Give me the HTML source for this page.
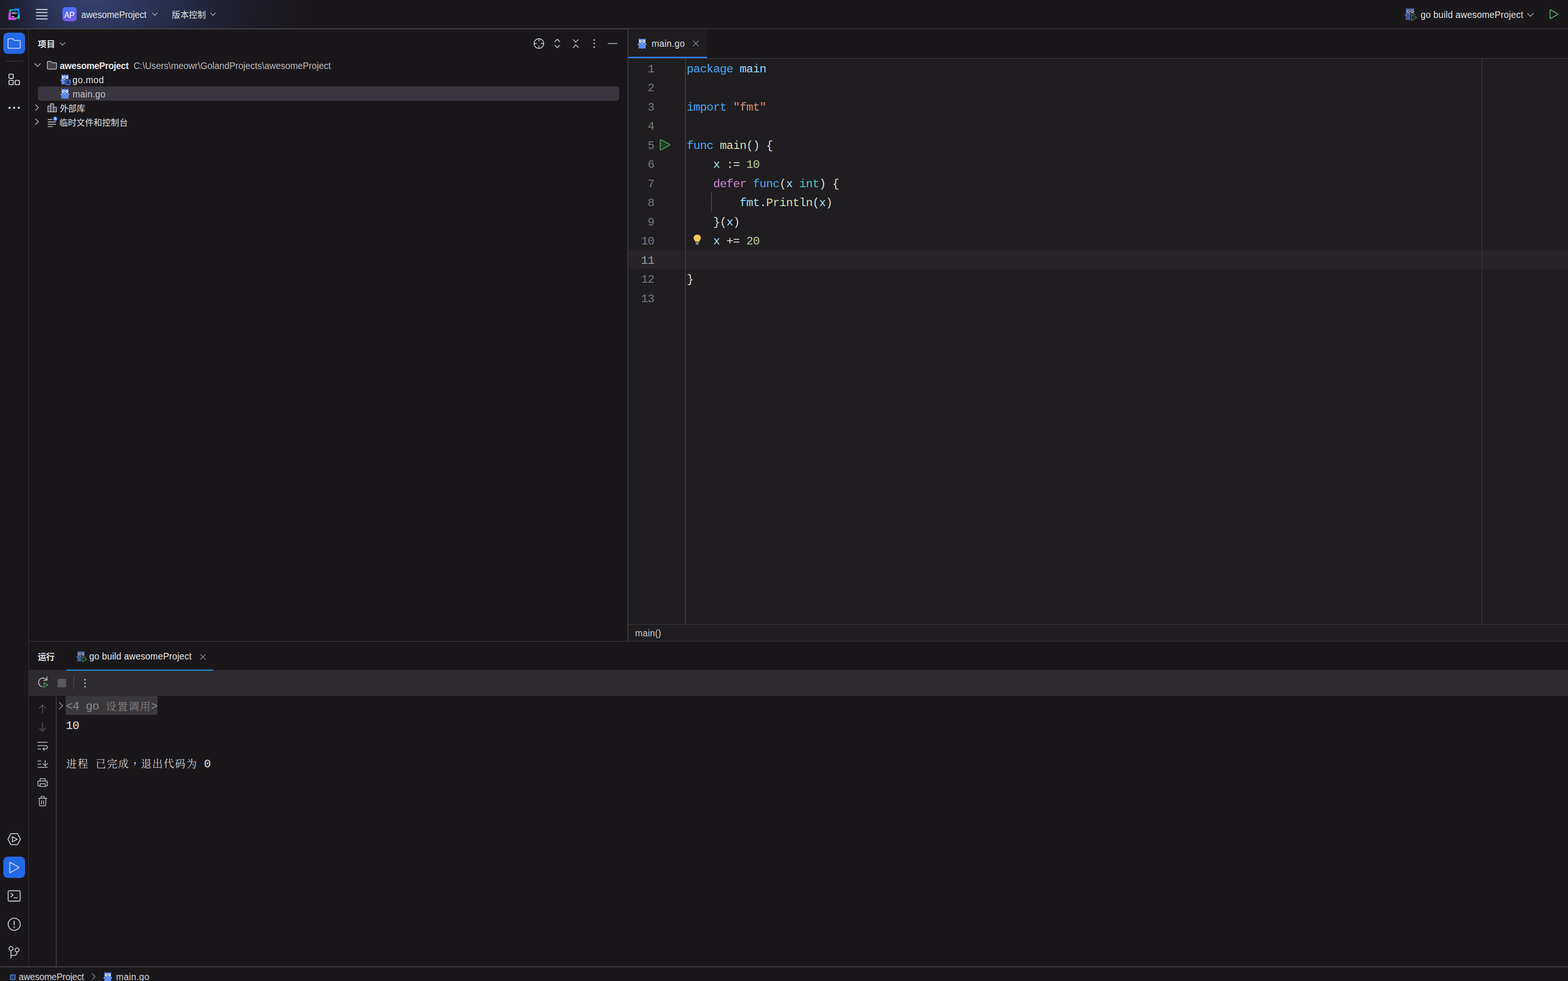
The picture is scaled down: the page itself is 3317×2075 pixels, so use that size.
<!DOCTYPE html>
<html lang="zh-CN">
<head>
<meta charset="utf-8">
<title>awesomeProject – main.go</title>
<style>
*{box-sizing:border-box;margin:0;padding:0}
html,body{width:3317px;height:2075px;overflow:hidden;background:#1a171b}
body{position:relative;font-family:"Liberation Sans","Noto Sans CJK SC",sans-serif;color:#dfe1e5}
.a{position:absolute}
.l{position:absolute;white-space:nowrap;font-size:19px;line-height:30px;height:30px;margin-top:1px;transform:scaleY(1.05);transform-origin:0 21.5px;font-family:"Liberation Sans","Noto Sans CJK SC",sans-serif;color:#dfe1e5}
.c{position:absolute;white-space:nowrap;font-size:18px;line-height:30px;height:30px;margin-top:1px;font-family:"Liberation Sans","Noto Sans CJK SC",sans-serif;color:#dfe1e5}
.b{font-weight:bold}
.ln{position:absolute;left:1329px;width:55px;text-align:right;font:24.5px/40.5px "Liberation Mono",monospace;letter-spacing:-.7px;margin-top:2.9px;color:#7a7678;height:40.5px}
.cl{position:absolute;left:1452.7px;white-space:pre;font:24.5px/40.5px "Liberation Mono",monospace;letter-spacing:-.7px;margin-top:2.9px;color:#d8d8d8;height:40.5px}
.k{color:#4ba6f2}.v{color:#9cdcfe}.s{color:#ce9178}.f{color:#dcdcaa}.n{color:#b5cea8}.d{color:#d183c9}.ty{color:#4ec9b0}.p{color:#d9d9d9}
.co{position:absolute;left:139.3px;white-space:pre;font:24.5px/40.5px "Liberation Mono","Noto Serif CJK SC",monospace;letter-spacing:-.7px;margin-top:4.1px;color:#e6e6e6;height:40.5px}
.co i{font-style:normal;font-family:"Noto Serif CJK SC",serif;font-size:22px;font-weight:300;letter-spacing:2px;line-height:0;position:relative;left:1px;top:.6px}
svg{position:absolute;overflow:visible}
</style>
</head>
<body>
<!--DEFS_S-->
<svg width="0" height="0" style="left:0;top:0"><defs>
<symbol id="g" viewBox="0 0 24 24">
<path d="M3.9 2.4 Q3.9 1.3 5 1.6 L8.4 3 L4.6 6.6Z M19.1 2.4 Q19.1 1.3 18 1.6 L14.6 3 L18.4 6.6Z" fill="#588cf8"/>
<path d="M4.1 9.2 C4.1 4 7.6 2 11.5 2 C15.4 2 18.9 4 18.9 9.2 L19.3 17 C19.3 21.2 16 22.8 11.5 22.8 C7 22.8 3.7 21.2 3.7 17Z" fill="#588cf8"/>
<ellipse cx="3.2" cy="13.6" rx="1.5" ry="1.1" transform="rotate(-30 3.2 13.6)" fill="#e2ab93"/>
<ellipse cx="19.8" cy="13.6" rx="1.5" ry="1.1" transform="rotate(30 19.8 13.6)" fill="#e2ab93"/>
<ellipse cx="4.9" cy="21.5" rx="1.3" ry="1" transform="rotate(-35 4.9 21.5)" fill="#e2ab93"/>
<ellipse cx="18.1" cy="21.5" rx="1.3" ry="1" transform="rotate(35 18.1 21.5)" fill="#e2ab93"/>
<circle cx="7.9" cy="7.3" r="2.8" fill="#fff"/><circle cx="15.1" cy="7.3" r="2.8" fill="#fff"/>
<circle cx="8.3" cy="7.2" r="1.05" fill="#15151a"/><circle cx="14.7" cy="7.2" r="1.05" fill="#15151a"/>
<ellipse cx="11.5" cy="11.6" rx="1.7" ry="1.1" fill="#f1d5c6"/>
<ellipse cx="11.5" cy="10.2" rx="1" ry="0.9" fill="#15151a"/>
</symbol>
<symbol id="gr" viewBox="0 0 24 24">
<g opacity=".6"><use href="#g" width="24" height="24"/></g>
<path d="M14 12.8 L14 23.6 L23.3 18.2Z" fill="#1a171b" stroke="#1a171b" stroke-width="4.4" stroke-linejoin="round"/>
<path d="M14 12.8 L14 23.6 L23.3 18.2Z" fill="#1d2921" stroke="#3c7346" stroke-width="1.6" stroke-linejoin="round"/>
</symbol>
</defs></svg>
<!--DEFS_E-->
<!-- ===== title bar ===== -->
<div class="a" id="titlebar" style="left:0;top:0;width:3317px;height:60px;background:linear-gradient(180deg,rgba(26,23,27,0) 0,rgba(26,23,27,.2) 100%),linear-gradient(90deg,#1c1b27 0,#20233a 40px,#2a3457 90px,#323f6c 150px,#33406e 200px,#2f3a63 270px,#29304f 350px,#23263d 430px,#1e1d2b 510px,#1b1920 600px,#1a171b 680px)"></div>
<div class="a" style="left:0;top:60px;width:3317px;height:1.5px;background:#49474c"></div>
<!--TITLE_S-->
<svg style="left:17px;top:17px" width="26" height="26" viewBox="17 17 26 26">
<defs><linearGradient id="lgm" x1="0" y1="0" x2="1" y2="1"><stop offset="0" stop-color="#a562f7"/><stop offset=".5" stop-color="#e046ff"/><stop offset="1" stop-color="#c955fb"/></linearGradient>
<linearGradient id="lgb" x1="0" y1="0" x2="0" y2="1"><stop offset="0" stop-color="#0a7dff"/><stop offset=".55" stop-color="#0a7dff"/><stop offset=".8" stop-color="#10d993"/><stop offset="1" stop-color="#10e08c"/></linearGradient></defs>
<path d="M19.8 25.5 L19.8 21.6 Q19.8 20 21.4 20 L28 20 L24 25Z" fill="#17dc8d"/>
<path d="M26.6 20.8 L30 18.3 Q30.6 17.9 31.3 17.9 L39 17.8 Q40 17.8 40.2 18.8 L41.8 30 L42.1 39 Q42.1 39.8 41.3 39.8 L34.6 39.8 L36.5 30 L30 23 L22 24.6Z" fill="url(#lgb)"/>
<path d="M17.9 28 Q17.9 27.2 18.6 26.8 L23.5 23.8 L26 36 L36 37 L33.2 41.5 Q32.8 42.1 32 42.1 L19 42.1 Q17.9 42.1 17.9 41Z" fill="url(#lgm)"/>
<rect x="23" y="23" width="14" height="14" fill="#000"/>
<text x="24" y="30.2" font-family="Liberation Sans,sans-serif" font-weight="bold" font-size="7.6" letter-spacing="-.3" fill="#fff">GO</text>
<rect x="24.1" y="34.2" width="6.6" height="1.8" fill="#d8d8d8"/>
</svg>
<svg style="left:76px;top:18px" width="25" height="24" viewBox="76 18 25 24" fill="none" stroke="#dcdde4" stroke-width="2"><path d="M76.2 19.9H100.6M76.2 26.6H100.6M76.2 33.4H100.6M76.2 40.1H100.6"/></svg>
<div class="a" style="left:132px;top:15px;width:30px;height:30px;border-radius:7px;background:linear-gradient(160deg,#4a72f4 0%,#5a68f0 45%,#8558e6 100%)"></div>
<div class="l" style="left:136.3px;top:15.8px;font-size:18px;color:#fff;transform:scale(.9,1.02);transform-origin:0 21.5px">AP</div>
<div class="l" id="t_proj" style="left:171.80px;top:15.5px;letter-spacing:-0.167px">awesomeProject</div>
<svg style="left:321px;top:26px" width="13" height="8" viewBox="0 0 13 8" fill="none" stroke="#a8a9b0" stroke-width="1.6"><path d="M1 1L6.5 6.5L12 1"/></svg>
<div class="c" id="t_vcs" style="left:363.50px;top:15.5px;letter-spacing:-0.033px">版本控制</div>
<svg style="left:444px;top:26px" width="13" height="8" viewBox="0 0 13 8" fill="none" stroke="#a8a9b0" stroke-width="1.6"><path d="M1 1L6.5 6.5L12 1"/></svg>
<!-- run config -->
<svg style="left:2969px;top:14.7px" width="29" height="29"><use href="#gr" width="29" height="29"/></svg>
<div class="l" id="t_rc" style="left:3005.30px;top:16px;letter-spacing:0.209px">go build awesomeProject</div>
<svg style="left:3230px;top:27px" width="15" height="9" viewBox="0 0 15 9" fill="none" stroke="#a8a9b0" stroke-width="1.6"><path d="M1 1L7.5 7.5L14 1"/></svg>
<svg style="left:3277px;top:19px" width="21" height="22" viewBox="0 0 21 22" fill="none" stroke="#5fb865" stroke-width="1.8" stroke-linejoin="round"><path d="M2 3 Q2 1.2 3.6 2 L17.6 10 Q19 11 17.6 12 L3.6 20 Q2 20.8 2 19Z"/></svg>
<!--TITLE_E-->
<!-- ===== left strip ===== -->
<div class="a" style="left:59.5px;top:61px;width:1.5px;height:1983px;background:#37353a"></div>
<!--STRIP_S-->
<div class="a" style="left:7px;top:69px;width:46px;height:45px;border-radius:9.5px;background:#2468e6"></div>
<svg style="left:0;top:61px" width="60" height="1983" viewBox="0 61 60 1983" fill="none" stroke="#d6d8de" stroke-width="1.8" stroke-linejoin="round" stroke-linecap="round">
<path d="M17 84 Q17 81.8 19.2 81.8 L26.6 81.8 Q27.6 81.8 28.2 82.6 L30.4 85.6 L40.6 85.6 Q42.8 85.6 42.8 87.8 L42.8 99.9 Q42.8 102.1 40.6 102.1 L19.2 102.1 Q17 102.1 17 99.9Z" stroke="#cfd6ea" stroke-linecap="butt"/>
<path d="M12 129.5H48.5" stroke="#38363b" stroke-width="1.3" stroke-linecap="butt"/>
<rect x="18.9" y="156.8" width="9.2" height="9.2" rx="2.2" stroke-width="1.9"/>
<rect x="18.9" y="169.9" width="9.2" height="9.2" rx="2.2" stroke-width="1.9"/>
<rect x="32" y="169.9" width="9.2" height="9.2" rx="2.2" stroke-width="1.9"/>
<g fill="#d6d8de" stroke="none"><circle cx="20.2" cy="228" r="2.3"/><circle cx="29.9" cy="228" r="2.3"/><circle cx="39.7" cy="228" r="2.3"/></g>
<!-- services -->
<path d="M16.8 1775 L22.7 1764 Q23.1 1763.4 23.8 1763.4 L36.3 1763.4 Q37 1763.4 37.4 1764 L43.3 1775 L37.4 1786 Q37 1786.6 36.3 1786.6 L23.8 1786.6 Q23.1 1786.6 22.7 1786Z" stroke-width="1.7"/>
<path d="M26.3 1769.8 L36.5 1775.2 L26.3 1780.6Z" stroke-width="1.7"/>
<!-- terminal -->
<rect x="17.3" y="1884.2" width="25.3" height="21.8" rx="2.6" stroke-width="1.8"/>
<path d="M23.2 1889.4 L27.6 1893.2 L23.2 1897 M30 1898.8 H36.4" stroke-width="1.8"/>
<!-- problems -->
<circle cx="30.1" cy="1955" r="12.8" stroke-width="1.8"/>
<path d="M30 1948.6 V1956.2" stroke-width="2"/><circle cx="30" cy="1961" r="1.5" fill="#d6d8de" stroke="none"/>
<!-- git -->
<circle cx="23.3" cy="2006.4" r="4.2" stroke-width="1.8"/><circle cx="36.1" cy="2009.3" r="4.2" stroke-width="1.8"/>
<path d="M23.3 2010.8 V2027.4 M36.1 2013.7 Q36.1 2020.9 29 2020.9 L23.3 2020.9" stroke-width="1.8" stroke-linecap="butt"/>
</svg>
<div class="a" style="left:7px;top:1812px;width:46px;height:45px;border-radius:9.5px;background:#2468e6"></div>
<svg style="left:7px;top:1812px" width="46" height="45" viewBox="7 1812 46 45" fill="none" stroke="#d3d9ec" stroke-width="1.8" stroke-linejoin="round"><path d="M20.6 1825.3 Q20.6 1823.6 22.1 1824.4 L39.3 1834.1 Q40.4 1834.9 39.3 1835.7 L22.1 1845.5 Q20.6 1846.3 20.6 1844.6Z"/></svg>
<!--STRIP_E-->
<!-- ===== project panel ===== -->
<!--PROJECT_S-->
<div class="c b" id="p_title" style="left:80.00px;top:78px;color:#e3e4e8;letter-spacing:0.400px">项目</div>
<svg style="left:126px;top:89px" width="13" height="8" viewBox="0 0 13 8" fill="none" stroke="#a8a9b0" stroke-width="1.5"><path d="M0.8 1L6.3 6.5L11.8 1"/></svg>
<svg style="left:1110px;top:70px" width="220" height="45" viewBox="1110 70 220 45" fill="none" stroke="#cfd0d6" stroke-width="1.6" stroke-linecap="round" stroke-linejoin="round">
<circle cx="1140" cy="92.1" r="10.2"/><path d="M1140 82V87.8M1140 96.4V102.2M1129.9 92.1H1135.7M1144.3 92.1H1150.1" stroke-linecap="butt"/>
<path d="M1173.6 88.4L1178.9 83.1L1184.2 88.4M1173.6 95.8L1178.9 101.1L1184.2 95.8"/>
<path d="M1212.5 83.8L1217.9 89.2L1223.3 83.8M1212.5 100.5L1217.9 95.1L1223.3 100.5"/>
<g fill="#cfd0d6" stroke="none"><circle cx="1257" cy="84.6" r="1.6"/><circle cx="1257" cy="92.1" r="1.6"/><circle cx="1257" cy="99.6" r="1.6"/></g>
<path d="M1286.3 92H1305.3"/>
</svg>
<!-- tree -->
<div class="a" style="left:80px;top:183px;width:1230px;height:30px;border-radius:6px;background:#39363f"></div>
<svg style="left:72px;top:132px" width="16" height="12" viewBox="72 132 16 12" fill="none" stroke="#b4b5bb" stroke-width="1.6" stroke-linecap="round" stroke-linejoin="round"><path d="M73.7 134.6L79.5 140.4L85.3 134.6"/></svg>
<svg style="left:98px;top:127px" width="24" height="24" viewBox="98 127 24 24" fill="#403e46" stroke="#c9cad1" stroke-width="1.5" stroke-linejoin="round"><path d="M100.2 131.5 Q100.2 129.8 101.9 129.8 L107 129.8 Q107.8 129.8 108.3 130.4 L110.2 132.8 L117.9 132.8 Q119.6 132.8 119.6 134.5 L119.6 144.5 Q119.6 146.2 117.9 146.2 L101.9 146.2 Q100.2 146.2 100.2 144.5Z"/></svg>
<div class="l b" id="p_root" style="left:126.50px;top:124.0px;color:#e6e7ea;letter-spacing:-0.318px">awesomeProject</div>
<div class="l" id="p_path" style="left:282.40px;top:124.0px;color:#b9b8bd;letter-spacing:0.007px">C:\Users\meowr\GolandProjects\awesomeProject</div>
<svg style="left:125.5px;top:156px" width="24" height="24"><use href="#g" width="24" height="24"/></svg>
<svg style="left:137px;top:167px" width="14" height="15" viewBox="137 167 14 15"><rect x="137.3" y="167.2" width="13.4" height="13.4" rx="3.6" fill="#1a171b"/><rect x="139.3" y="169.2" width="9.4" height="10.4" rx="2.4" fill="#273762" stroke="#5a8cf5" stroke-width="1.5"/></svg>
<div class="l" id="p_gomod" style="left:153.30px;top:154.0px;letter-spacing:0.559px">go.mod</div>
<svg style="left:125.5px;top:186px" width="24" height="24"><use href="#g" width="24" height="24"/></svg>
<div class="l" id="p_maingo" style="left:153.4px;top:184px;color:#c2c1c6;letter-spacing:0.33px">main.go</div>
<svg style="left:72px;top:220px" width="12" height="16" viewBox="72 220 12 16" fill="none" stroke="#b4b5bb" stroke-width="1.6" stroke-linecap="round" stroke-linejoin="round"><path d="M75.2 221.9L81.2 227.6L75.2 233.3"/></svg>
<svg style="left:98px;top:216px" width="24" height="24" viewBox="98 216 24 24" fill="#403e46" stroke="#c9cad1" stroke-width="1.5" stroke-linejoin="round"><path d="M101.4 224.3H107.3V236.6H101.4Z M107.3 219.5H113.3V236.6H107.3Z M113.3 226.7H119.4V236.6H113.3Z"/></svg>
<div class="c" id="p_ext" style="left:126.50px;top:214px;letter-spacing:-0.150px">外部库</div>
<svg style="left:72px;top:250px" width="12" height="16" viewBox="72 250 12 16" fill="none" stroke="#b4b5bb" stroke-width="1.6" stroke-linecap="round" stroke-linejoin="round"><path d="M75.2 251.7L81.2 257.4L75.2 263.1"/></svg>
<svg style="left:98px;top:245px" width="26" height="26" viewBox="98 245 26 26" fill="none" stroke="#c9cad1" stroke-width="1.6"><path d="M101 252.9H110.5M101 257.9H118.3M101 262.9H118.3M101 267.8H111.8"/><circle cx="116.6" cy="251.2" r="5.3" fill="#4f86f3" stroke="#1a171b" stroke-width="1.4"/><path d="M116.5 248.3V251.6L118.8 253.4" stroke="#fff" stroke-width="1.3" stroke-linecap="round" fill="none"/></svg>
<div class="c" id="p_scratch" style="left:125.50px;top:243.5px;letter-spacing:0.143px">临时文件和控制台</div>
<!--PROJECT_E-->
<!-- ===== editor ===== -->
<div class="a" style="left:1327.2px;top:61px;width:1.7px;height:1295px;background:#3a383c"></div>
<!--EDITOR_S-->
<div class="a" style="left:1329px;top:61px;width:1988px;height:62px;background:#1a171b"></div>
<div class="a" style="left:1329px;top:61px;width:167px;height:62px;background:#1f1d20"></div>
<div class="a" style="left:1329px;top:122.6px;width:1988px;height:1.5px;background:#454348"></div>
<div class="a" style="left:1329px;top:119.7px;width:167px;height:3.5px;border-radius:1.8px;background:#2f7bf2"></div>
<svg style="left:1347px;top:80px" width="24" height="24"><use href="#g" width="24" height="24"/></svg>
<div class="l" id="e_tab" style="left:1378.50px;top:76.5px;color:#dfe0e4;letter-spacing:0.412px">main.go</div>
<svg style="left:1465px;top:85px" width="14" height="14" viewBox="0 0 14 14" fill="none" stroke="#86858b" stroke-width="1.5" stroke-linecap="round"><path d="M1.5 1.5L12.5 12.5M12.5 1.5L1.5 12.5"/></svg>
<div class="a" style="left:1329px;top:124px;width:1988px;height:1196px;background:#1f1d20"></div>
<div class="a" style="left:1329px;top:529px;width:1988px;height:40px;background:#262427"></div>
<div class="a" style="left:1449px;top:124px;width:2px;height:1196px;background:#3b393d"></div>
<div class="a" style="left:3134px;top:124px;width:1px;height:1196px;background:#3e3c40"></div>
<div class="a" style="left:1504.2px;top:407px;width:1.6px;height:41px;background:#434145"></div>
<div class="a" style="left:1461px;top:326.5px;width:1px;height:243px;background:#232124"></div>
<div class="ln" style="top:124.0px;color:#7a7678">1</div>
<div class="cl" style="top:124.0px"><span class="k">package</span> <span class="v">main</span></div>
<div class="ln" style="top:164.5px;color:#7a7678">2</div>
<div class="ln" style="top:205.0px;color:#7a7678">3</div>
<div class="cl" style="top:205.0px"><span class="k">import</span> <span class="s">"fmt"</span></div>
<div class="ln" style="top:245.5px;color:#7a7678">4</div>
<div class="ln" style="top:286.0px;color:#7a7678">5</div>
<div class="cl" style="top:286.0px"><span class="k">func</span> <span class="f">main</span><span class="p">() {</span></div>
<div class="ln" style="top:326.5px;color:#7a7678">6</div>
<div class="cl" style="top:326.5px">    <span class="v">x</span> <span class="p">:=</span> <span class="n">10</span></div>
<div class="ln" style="top:367.0px;color:#7a7678">7</div>
<div class="cl" style="top:367.0px">    <span class="d">defer</span> <span class="k">func</span><span class="p">(</span><span class="v">x</span> <span class="ty">int</span><span class="p">) {</span></div>
<div class="ln" style="top:407.5px;color:#7a7678">8</div>
<div class="cl" style="top:407.5px">        <span class="v">fmt</span><span class="p">.</span><span class="f">Println</span><span class="p">(</span><span class="v">x</span><span class="p">)</span></div>
<div class="ln" style="top:448.0px;color:#7a7678">9</div>
<div class="cl" style="top:448.0px">    <span class="p">}(</span><span class="v">x</span><span class="p">)</span></div>
<div class="ln" style="top:488.5px;color:#7a7678">10</div>
<div class="cl" style="top:488.5px">    <span class="v">x</span> <span class="p">+=</span> <span class="n">20</span></div>
<div class="ln" style="top:529.0px;color:#9e9a9a">11</div>
<div class="ln" style="top:569.5px;color:#7a7678">12</div>
<div class="cl" style="top:569.5px"><span class="p">}</span></div>
<div class="ln" style="top:610.0px;color:#7a7678">13</div>
<svg style="left:1394px;top:292px" width="28" height="30" viewBox="1394 292 28 30" fill="#233d29" stroke="#4f9a58" stroke-width="1.9" stroke-linejoin="round"><path d="M1396.6 297 Q1396.6 294.6 1398.7 295.7 L1416.2 305.3 Q1417.6 306.3 1416.2 307.3 L1398.7 316.9 Q1396.6 318 1396.6 315.6Z"/></svg>
<svg style="left:1464px;top:494px" width="22" height="26" viewBox="1464 494 22 26"><path d="M1475 496.3 C1470.3 496.3 1467.3 499.6 1467.3 503.4 C1467.3 506.6 1469.6 508 1470.6 510.4 L1470.9 511.6 L1479.1 511.6 L1479.4 510.4 C1480.4 508 1482.7 506.6 1482.7 503.4 C1482.7 499.6 1479.7 496.3 1475 496.3Z" fill="#f2c55c"/><path d="M1471.2 513.7H1478.8M1472.2 516.4H1477.8" stroke="#cfcfd3" stroke-width="1.5" fill="none"/></svg>
<div class="a" style="left:1329px;top:1320px;width:1988px;height:1px;background:#3e3c41"></div>
<div class="a" style="left:1329px;top:1321px;width:1988px;height:35px;background:#1f1d20"></div>
<div class="l" id="e_bc" style="left:1343.50px;top:1324px;color:#c9cad0;letter-spacing:0.258px">main()</div>
<!--EDITOR_E-->
<!-- ===== run panel ===== -->
<div class="a" style="left:61px;top:1356px;width:3256px;height:1px;background:#3c3a3f"></div>
<!--RUN_S-->
<div class="c b" id="r_title" style="left:80.00px;top:1373.5px;color:#e3e4e8;letter-spacing:-0.500px">运行</div>
<svg style="left:158px;top:1373px" width="29" height="29"><use href="#gr" width="25" height="25" x="1.5" y="2.5"/></svg>
<div class="l" id="r_tab" style="left:188.70px;top:1372.5px;color:#e6e7ea;letter-spacing:0.191px">go build awesomeProject</div>
<svg style="left:423px;top:1383px" width="13" height="13" viewBox="0 0 13 13" fill="none" stroke="#86858b" stroke-width="1.5" stroke-linecap="round"><path d="M1.2 1.2L11.6 11.6M11.6 1.2L1.2 11.6"/></svg>
<div class="a" style="left:61px;top:1417px;width:3256px;height:53px;background:#2d2b2f"></div>
<div class="a" style="left:61px;top:1470px;width:3256px;height:1px;background:#3e3c40"></div>
<div class="a" style="left:139.5px;top:1416px;width:311.5px;height:3.2px;border-radius:1.6px;background:#2a78b6"></div>
<svg style="left:61px;top:1417px" width="140" height="53" viewBox="61 1417 140 53" fill="none" stroke="#cfd0d6" stroke-width="1.6" stroke-linecap="round" stroke-linejoin="round">
<path d="M92.4 1452.6 A9.3 9.3 0 1 1 98.6 1438.4 M99.4 1431.6 V1438.8 H92.2"/>
<path d="M92.6 1443.6 L101.6 1448.6 L92.6 1454Z" fill="#2d2b2f" stroke="#2d2b2f" stroke-width="4.5"/>
<path d="M93 1443.8 L101.4 1448.7 L93 1453.7Z" stroke="#57a85f" stroke-width="1.5"/>
<rect x="121.9" y="1436" width="18.2" height="18" rx="2.4" fill="#5a585d" stroke="none"/>
<path d="M156.2 1429.5V1458.5" stroke="#4f4d52" stroke-width="1.4" stroke-linecap="butt"/>
<g fill="#cfd0d6" stroke="none"><circle cx="179.8" cy="1437.8" r="1.6"/><circle cx="179.8" cy="1445.1" r="1.6"/><circle cx="179.8" cy="1452.6" r="1.6"/></g>
</svg>
<div class="a" style="left:118px;top:1471px;width:1.5px;height:573px;background:#39373c"></div>
<svg style="left:61px;top:1471px" width="58" height="250" viewBox="61 1471 58 250" fill="none" stroke="#c8c9cf" stroke-width="1.5" stroke-linecap="round" stroke-linejoin="round">
<path d="M89.8 1508V1490.9M83.2 1498.1L89.8 1490.9L96.4 1498.1" stroke="#59575c"/>
<path d="M89.8 1528.7V1546.3M83.2 1539.5L89.8 1546.5L96.4 1539.5" stroke="#59575c"/>
<path d="M79.9 1570.1H100.2M79.9 1577.2H96.8Q100.4 1577.2 100.4 1580.7Q100.4 1584.2 96.8 1584.2H91M93.9 1581.2L90.6 1584.2L93.9 1587.2M79.9 1584.2H86.5"/>
<path d="M79.9 1609.5H86.5M79.9 1616.4H86.5M79.9 1623.1H100.2M95.6 1608.2V1619.6M90.8 1614.9L95.6 1619.8L100.4 1614.9"/>
<path d="M84.8 1652V1646.9H95.6V1652M84.8 1662.6H82Q80.2 1662.6 80.2 1660.8V1653.8Q80.2 1652 82 1652H98.4Q100.2 1652 100.2 1653.8V1660.8Q100.2 1662.6 98.4 1662.6H95.6M84.8 1657.8H95.6V1663.6H84.8Z"/><circle cx="97.6" cy="1654.8" r=".9" fill="#c8c9cf" stroke="none"/>
<path d="M81.2 1688.4H98.9M86.5 1688V1686.2Q86.5 1684.4 88.3 1684.4H92.1Q93.9 1684.4 93.9 1686.2V1688M82.9 1688.6L83.6 1702.6Q83.8 1704.6 85.8 1704.6H94.3Q96.3 1704.6 96.5 1702.6L97.2 1688.6M87.8 1693.4V1700.6M92.3 1693.4V1700.6"/>
</svg>
<svg style="left:124px;top:1484px" width="11" height="18" viewBox="124 1484 11 18" fill="none" stroke="#9a999e" stroke-width="1.5" stroke-linecap="round" stroke-linejoin="round"><path d="M125.6 1485.6L132.6 1492.7L125.6 1499.8"/></svg>
<div class="a" style="left:139px;top:1471.5px;width:194px;height:40px;background:#3a383c"></div>
<div class="co" style="top:1471px;color:#8c8a8c">&lt;4 go <i>设置调用</i>&gt;</div>
<div class="co" style="top:1511.5px">10</div>
<div class="co" style="top:1592.5px"><i>进程</i> <i>已完成</i><i lang="zh-TW" style="font-family:'Noto Sans CJK TC','Noto Serif CJK SC',serif">，</i><i>退出代码为</i> 0</div>
<!--RUN_E-->
<!-- ===== status bar ===== -->
<div class="a" style="left:0;top:2044px;width:3317px;height:1.6px;background:#434146"></div>
<!--STATUS_S-->
<svg style="left:20px;top:2060px" width="15" height="15" viewBox="20 2060 15 15"><rect x="21.9" y="2061.9" width="10.4" height="10.6" rx="2.4" fill="#2b3a66" stroke="#4a80e8" stroke-width="1.6"/></svg>
<div class="l" id="s_proj" style="left:39.50px;top:2050.5px;color:#d8d9de;letter-spacing:-0.159px">awesomeProject</div>
<svg style="left:192px;top:2058px" width="12" height="16" viewBox="192 2058 12 16" fill="none" stroke="#8e8d92" stroke-width="1.5" stroke-linecap="round" stroke-linejoin="round"><path d="M195 2059.5L201.2 2065.8L195 2072"/></svg>
<svg style="left:217px;top:2054.5px" width="23" height="23"><use href="#g" width="23" height="23"/></svg>
<div class="l" id="s_file" style="left:245.60px;top:2050.5px;color:#d8d9de;letter-spacing:0.429px">main.go</div>
<!--STATUS_E-->
</body>
</html>
